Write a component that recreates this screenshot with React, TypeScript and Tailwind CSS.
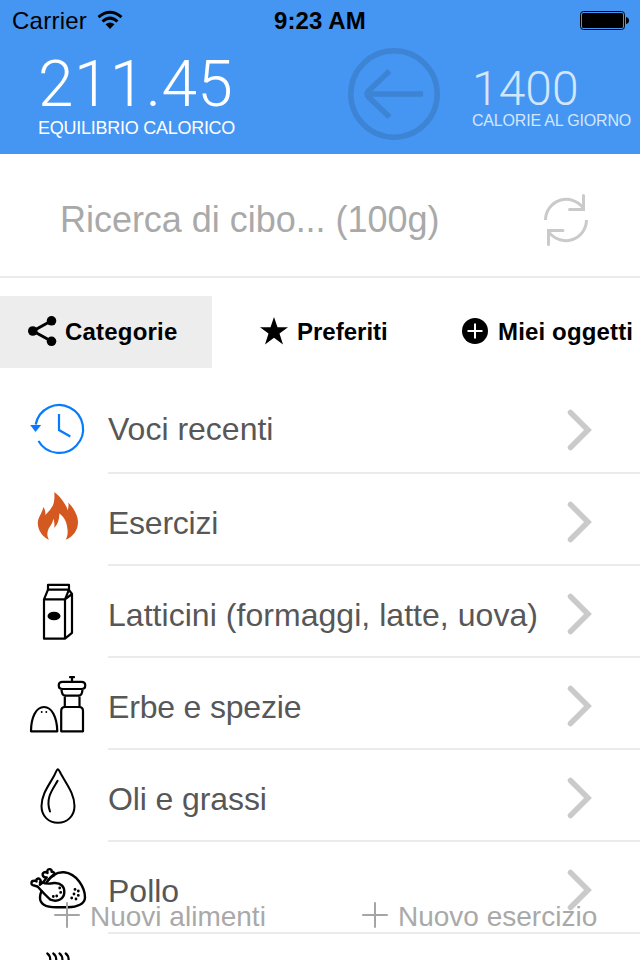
import type { ReactNode } from "react";

const ink = { fill: "none", stroke: "#000", strokeWidth: 2.2, strokeLinecap: "round", strokeLinejoin: "round" } as const;

const HistoryIcon = () => (
  <svg className="mt-px" width="60" height="60" viewBox="0 0 60 60" fill="none" stroke="#067bfd" strokeWidth="2.200">
    <path d="M7.700 25.500A23.900 23.900 0 1 1 10.500 42" />
    <path d="M31 15V31L42.300 37.500" />
    <path d="M2.200 26H13.200L7.500 33Z" fill="#067bfd" stroke="none" />
  </svg>
);

const FlameIcon = () => (
  <svg width="60" height="60" viewBox="0 0 60 60" fill="#d45920">
    <path d="M26.300 2C31 5.500 34 9.500 36.500 13.500C38.500 16.500 39.500 18.500 39.300 20.500C40.500 18 40.800 15.500 40.300 12.500C45.500 17.500 50 25.500 50 32C50 40 45.500 46.500 37.700 49.800C40 46 39.900 41 39.300 38C38.500 31 36 27 31.300 23.500C31.500 28.500 30 34 26.300 38C26.600 34.500 26.500 31.500 25.300 28.800C25 32 23 35.500 20.700 38.500C19 42 18.700 46 21 49.800C14 46.500 9.800 40 9.800 33C9.800 27 14.500 23 15.300 17C17 19.500 17.700 22 17.300 25C20 22.500 24 18 25.300 14.300C26.500 11 26.600 6 26.300 2Z" />
  </svg>
);

const MilkIcon = () => (
  <svg width="60" height="60" viewBox="0 0 60 60" {...ink}>
    <path d="M20 2.800H41V7.600H20ZM20 7.600L16 17.300V56.700H37V17.300H16M41 7.600L37 17.300M41 8L44 12V50.800L37 56.700M37 17.300L44 12" />
    <ellipse cx="26" cy="34" rx="6.500" ry="4.300" fill="#000" stroke="none" />
  </svg>
);

const SpicesIcon = () => (
  <svg width="60" height="60" viewBox="0 0 60 60" {...ink}>
    <path d="M42 3.200H46M44 3.500V7.500M34.500 7.900H53.500C58.500 7.900 58.500 15 53.500 15H34.500C29.500 15 29.500 7.900 34.500 7.900ZM33.500 15C33.500 19.500 34.500 21.700 37.500 21.700H50.500C53.500 21.700 54.500 19.500 54.500 15M36.800 22V33M51.500 22V33" />
    <path d="M37 33H51C53.500 33 55 34.500 55 37V57.300H33.200V37C33.200 34.500 34.700 33 37 33ZM3 57.300C3 43.500 8 33 16 33S29 43.500 29.300 57.300Z" />
    <path d="M13.700 38V38.100M18.300 38V38.100" strokeWidth="1.900" />
  </svg>
);

const OilIcon = () => (
  <svg width="60" height="60" viewBox="0 0 60 60" {...ink} strokeWidth={2}>
    <path d="M29.900 3.200C28.500 3.800 28 6 26.500 9C21.500 18.500 13.500 28 13.500 40C13.500 50 20.500 56.800 29.900 56.800S46.500 50 46.500 40C46.500 28 38.500 18 33 8C31.500 5 31 3.500 29.900 3.200Z" />
    <path d="M29.600 14.800C25 23 17 32 22 45.500" />
  </svg>
);

const ChickenIcon = () => (
  <svg width="60" height="60" viewBox="0 0 60 60" {...ink} strokeWidth={2.4}>
    <path d="M18.500 24.500C23 17.500 29 13.800 36 14.300C49 15.500 57 30 57 39.500C57 46 49 49 40 49.300H28C17 49.300 12 46 12 39.500C12 37 12.500 35.500 13.500 33" />
    <path d="M12 26.700L14.500 24.500C18 26.500 22 25.800 26 25C33 24.500 36.500 29 36.300 34C36.300 41 29.500 44.500 22.500 41.700C18 38 14 33.500 9.700 28.700" />
    <path d="M14.500 24.500L12 26.300M12 24.500C14 22 10.500 18.800 8.500 21.500V23.500L6.500 22.700C2.500 22.500 2.500 27.500 6 27.500L9.700 28.700M15 24.500L18.800 19.500C14 19.500 13 14.500 17.500 14L19.500 15L19.300 12.800C20 10 24 11 23.700 13.800C28 14 27 18 23.700 18.500L20.500 22" />
    <path d="M31.700 30V30.100M32.700 34.300V34.400M28.700 38V38.100M25.300 38.500V38.600M47 31.300V31.400M50.300 33V33.100M46 36V36.100M50.300 37.300V37.400M43.700 40V40.100M48 41V41.100" strokeWidth="2.800" />
  </svg>
);

const SteamIcon = () => (
  <svg width="60" height="60" viewBox="0 0 60 60" {...ink}>
    <path d="M19.300 3.500Q22.500 5.500 22.300 11M25.300 3.500Q28.500 5.500 28.300 11M31.500 3.500Q34.700 5.500 34.500 11M37.700 3.500Q40.900 5.500 40.700 11" />
  </svg>
);

const Chevron = () => (
  <svg className="-mt-px ml-auto mr-11 shrink-0" width="32" height="48" viewBox="0 0 32 48" fill="none" stroke="#cacaca" strokeWidth="5.500">
    <path d="M6.500 6.500L24 24L6.500 41.500" strokeLinecap="round" />
  </svg>
);

function Row({ icon, label, spacing = "", lift = "mt-px" }: { icon: ReactNode; label: string; spacing?: string; lift?: string }) {
  return (
    <div className="flex h-[92px] shrink-0">
      <div className="flex w-[108px] shrink-0 items-center pl-7">{icon}</div>
      <div className="flex flex-1 items-center border-b-2 border-[#ebebeb] pt-[7px]">
        <span className={`whitespace-nowrap text-[32px] leading-10 text-[#575757] ${spacing} ${lift}`}>{label}</span>
        <Chevron />
      </div>
    </div>
  );
}

const Plus = () => (
  <svg className="-mt-0.5" width="26" height="26" viewBox="0 0 26 26" stroke="#a5a5a5" strokeWidth="2" strokeLinecap="round">
    <path d="M13 1V25M1 13H25" />
  </svg>
);

export default function App() {
  return (
    <div className="relative flex h-[960px] w-[640px] flex-col overflow-hidden bg-white font-['Liberation_Sans',sans-serif]">
      <header className="h-[154px] shrink-0 bg-[#4596f2]">
        <div className="grid h-[41px] grid-cols-3 items-center text-2xl leading-7 text-black">
          <div className="flex items-center pl-3">
            <span className="tracking-[0.25px]">Carrier</span>
            <svg className="ml-2.5 -mt-px" width="26" height="20" viewBox="0 0 26 20" fill="none" stroke="#000" strokeWidth="3">
              <path d="M1.500 7.200Q13-2.600 24.500 7.200M5.500 11.500Q13 4.800 20.500 11.500" />
              <path d="M8.500 14.300Q13 10.600 17.500 14.300L13 18.900Z" fill="#000" stroke="none" />
            </svg>
          </div>
          <div className="text-center font-bold tracking-[0.1px]">9:23 AM</div>
          <svg className="ml-auto mr-2.5" width="50" height="20" viewBox="0 0 50 20">
            <rect x="0.500" y="0.500" width="44" height="18" rx="3" fill="none" stroke="#000" />
            <rect x="2" y="2" width="41" height="15" rx="1.500" />
            <path d="M46 6Q49 6.500 49 9.500T46 13Z" />
          </svg>
        </div>
        <div className="flex h-[113px] items-start text-white">
          <div className="w-[346px] pl-[38px] pt-[13px]">
            <div className="whitespace-nowrap font-['Roboto',sans-serif] text-[64px] font-light leading-[62px] tracking-[0.4px]">211.45</div>
            <div className="mt-0.5 whitespace-nowrap text-lg leading-5 tracking-[-0.26px]">EQUILIBRIO CALORICO</div>
          </div>
          <svg className="mt-[5px]" width="96" height="96" viewBox="0 0 96 96" fill="none" stroke="#3d84d5" strokeWidth="5.500">
            <circle cx="48" cy="48" r="43.200" />
            <path d="M77 48H22M43.500 25L22.500 45Q19.500 48 22.500 51L43.500 71" />
          </svg>
          <div className="ml-[30px] pt-[24px] text-[#d2e6fc]">
            <div className="font-['Roboto',sans-serif] text-[48px] font-light leading-[47px]">1400</div>
            <div className="whitespace-nowrap text-base leading-[18px] tracking-[-0.18px]">CALORIE AL GIORNO</div>
          </div>
        </div>
      </header>

      <div className="flex h-[124px] shrink-0 items-center border-b-2 border-[#ebebeb] pl-[60px]">
        <span className="mt-[9px] text-[36px] leading-[44px] tracking-[-0.03px] text-[#a9a9a9]">Ricerca di cibo... (100g)</span>
        <svg className="ml-auto mr-[50px] mt-[10px]" width="48" height="56" viewBox="0 0 48 56" fill="none" stroke="#cacaca" strokeWidth="3">
          <path d="M3.500 28A20.800 20.800 0 0 1 41.500 16.500M44.500 28A20.800 20.800 0 0 1 6.500 39.500" />
          <path d="M41.500 3.500V17.500H27.500M6.500 52.500V38.500H21" strokeLinecap="round" />
        </svg>
      </div>

      <nav className="mt-[18px] flex h-[72px] shrink-0 items-center text-2xl font-bold leading-7 text-black">
        <div className="flex h-full w-[212px] items-center bg-[#ededed] pl-7">
          <svg className="-mt-0.5 mr-2" width="29" height="32" viewBox="0 0 29 32">
            <path d="M23.500 5.800L5 16L23.500 26.300" fill="none" stroke="#000" strokeWidth="3" />
            <circle cx="23.500" cy="5.800" r="4.800" /><circle cx="4.800" cy="16" r="4.800" /><circle cx="23.500" cy="26.300" r="4.800" />
          </svg>
          <span className="whitespace-nowrap tracking-[0.2px]">Categorie</span>
        </div>
        <div className="flex w-[250px] items-center pl-12">
          <svg className="-mt-0.5 mr-[9px]" width="28" height="28" viewBox="0 0 28 28">
            <path d="M14 0L17.500 10.300H28L19.500 16.600L23 27.500L14 20.800L5 27.500L8.500 16.600L0 10.300H10.500Z" />
          </svg>
          <span className="whitespace-nowrap">Preferiti</span>
        </div>
        <div className="flex items-center">
          <svg className="-mt-0.5 mr-2.5 shrink-0" width="26" height="26" viewBox="0 0 26 26">
            <circle cx="13" cy="13" r="13" /><path d="M13 5.500V20.500M5.500 13H20.500" stroke="#fff" strokeWidth="2" />
          </svg>
          <span className="whitespace-nowrap tracking-[0.15px]">Miei oggetti</span>
        </div>
      </nav>

      <main className="mt-[14px] flex flex-col">
        <Row icon={<HistoryIcon />} label="Voci recenti" lift="-mt-[3px]" />
        <Row icon={<FlameIcon />} label="Esercizi" spacing="tracking-[-0.25px]" />
        <Row icon={<MilkIcon />} label="Latticini (formaggi, latte, uova)" spacing="tracking-[0.04px]" />
        <Row icon={<SpicesIcon />} label="Erbe e spezie" spacing="tracking-[-0.18px]" />
        <Row icon={<OilIcon />} label="Oli e grassi" spacing="tracking-[-0.1px]" />
        <Row icon={<ChickenIcon />} label="Pollo" />
        <Row icon={<SteamIcon />} label="" />
      </main>

      <div className="absolute inset-x-0 bottom-[26px] flex h-9 items-center text-[28px] leading-9 text-[#a9a9a9]">
        <div className="flex w-[308px] items-center gap-[10px] pl-[54px]">
          <Plus />
          <span className="mt-0.5 whitespace-nowrap">Nuovi alimenti</span>
        </div>
        <div className="flex items-center gap-[10px] pl-[54px]">
          <Plus />
          <span className="mt-0.5 whitespace-nowrap">Nuovo esercizio</span>
        </div>
      </div>
    </div>
  );
}
